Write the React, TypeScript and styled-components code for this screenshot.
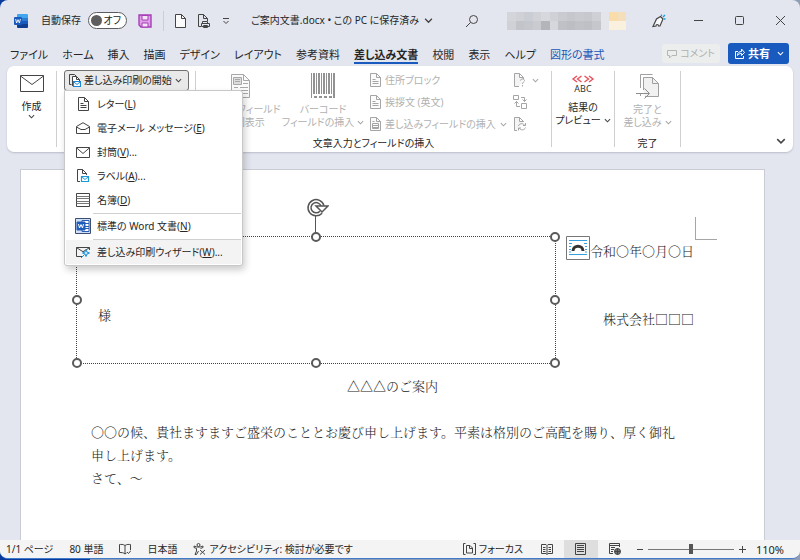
import React, { useState } from 'react';
import styled, { createGlobalStyle, css } from 'styled-components';

const GlobalStyle = createGlobalStyle`
  * { box-sizing: border-box; }
  body {
    margin: 0;
    background: linear-gradient(90deg, #0a3a9c 0 90px, #8f9db5 90px);
    color: #262626;
    font-family: 'Noto Sans', 'Noto Sans CJK JP', sans-serif;
    font-size: 10px;
    line-height: 13px;
  }
  button {
    margin: 0;
    padding: 0;
    border: 0;
    background: none;
    color: inherit;
    font: inherit;
    cursor: pointer;
  }
  button:disabled { color: #b1b1b1; cursor: default; }
  svg { display: block; flex: none; }
`;

const Window = styled.div`
  display: flex;
  flex-direction: column;
  min-height: calc(100vh - 1px);
  overflow: hidden;
  border-bottom: 1px solid #3f7acb;
  border-radius: 8px;
  background: #e3e6ef;
  font-feature-settings: 'palt';
  white-space: nowrap;
`;

const TitleBar = styled.header`
  display: flex;
  align-items: center;
  height: 41px;
  padding: 0 14px;
`;

const Cluster = styled.div<{ $gap: number; $left?: number }>`
  display: flex;
  align-items: center;
  gap: ${(p) => p.$gap}px;
  margin-left: ${(p) => p.$left ?? 0}px;
`;

const Spacer = styled.div`
  flex: 1;
`;

const AutoSave = styled.label`
  display: flex;
  align-items: center;
  gap: 7px;
  margin-left: 13px;
`;

const Toggle = styled.span`
  position: relative;
  display: flex;
  align-items: center;
  justify-content: flex-end;
  width: 39px;
  height: 17px;
  padding-right: 5px;
  border: 1px solid #5c5c5c;
  border-radius: 9px;
  background: #fff;

  input {
    position: absolute;
    left: 2px;
    width: 11px;
    height: 11px;
    margin: 0;
    border-radius: 50%;
    background: #5e5e5e;
    appearance: none;
  }
`;

const Divider = styled.span`
  width: 1px;
  height: 20px;
  background: #cbced6;
`;

const DocName = styled.button`
  display: flex;
  align-items: center;
  gap: 5px;
  margin-left: 21px;
`;

const TabRow = styled.nav`
  display: flex;
  align-items: center;
  height: 25px;
  padding: 0 11px 0 10px;
`;

const Tabs = styled.div`
  display: flex;
  gap: 14px;
`;

const Tab = styled.button<{ $active?: boolean; $context?: boolean }>`
  height: 20px;
  padding-top: 3px;
  border-bottom: 2px solid transparent;
  font-size: 11px;
  ${(p) => p.$context && css`color: #1b56b5;`}
  ${(p) => p.$active && css`
    border-color: #185abd;
    font-weight: 700;
  `}
`;

const CommentButton = styled.button`
  display: flex;
  align-items: center;
  gap: 3px;
  height: 19px;
  padding: 0 5px;
  border-radius: 3px;
  background: #eceded;
`;

const ShareButton = styled.button`
  display: flex;
  align-items: center;
  gap: 3px;
  height: 21px;
  margin-left: 8px;
  padding: 0 5px 0 6px;
  border-radius: 3px;
  background: #185abd;
  color: #fff;
  font-size: 11px;
  font-weight: 700;
`;

const Ribbon = styled.section`
  position: relative;
  z-index: 2;
  display: flex;
  height: 86px;
  margin: 0 7px;
  padding: 5px 0;
  border-radius: 7px;
  background: #fff;
  box-shadow: 0 1px 2px #b9bdc8;
`;

const Group = styled.div<{ $width: number }>`
  position: relative;
  display: flex;
  flex: none;
  flex-direction: column;
  align-items: center;
  justify-content: space-between;
  width: ${(p) => p.$width}px;
  border-right: 1px solid #cfcfcf;
`;

const Commands = styled.div`
  display: flex;
  align-items: flex-start;
  width: 100%;
`;

const BigButton = styled.button<{ $width?: number }>`
  display: flex;
  flex: none;
  flex-direction: column;
  align-items: center;
  width: ${(p) => (p.$width ? `${p.$width}px` : '100%')};
  padding-top: 2px;

  svg + span { margin-top: 4px; }
`;

const WithArrow = styled.span`
  display: flex;
  align-items: center;
  gap: 3px;
`;

const Stack = styled.div<{ $left?: number }>`
  display: flex;
  flex-direction: column;
  margin: -2px 0 0 ${(p) => p.$left ?? 0}px;
`;

const SmallButton = styled.button`
  display: flex;
  align-items: center;
  gap: 4px;
  height: 22px;
`;

const GroupLabel = styled.span`
  margin-bottom: -3px;
  color: #262626;
`;

const StartButton = styled.button`
  display: flex;
  align-items: center;
  gap: 3px;
  height: 21px;
  margin: -1px 0 0 7px;
  padding: 0 6px 0 4px;
  border: 1px solid #707070;
  border-radius: 3px;
  background: #e9e9e9;
`;

const Menu = styled.div`
  position: absolute;
  top: 19px;
  left: 7px;
  z-index: 3;
  width: 179px;
  padding: 1px;
  border: 1px solid #c8c8c8;
  border-radius: 0 3px 3px 3px;
  background: #fff;
  box-shadow: 2px 4px 7px #00000033;
`;

const MenuItem = styled.button<{ $hover?: boolean }>`
  display: flex;
  align-items: center;
  gap: 5px;
  width: 100%;
  height: 24px;
  padding-left: 8px;
  background: ${(p) => (p.$hover ? '#f3f3f3' : 'transparent')};
  text-align: left;
`;

const MenuIcon = styled.span`
  display: flex;
  flex: none;
  justify-content: center;
  width: 18px;
`;

const MenuLine = styled.hr`
  height: 1px;
  margin: 1px 0 0 27px;
  border: 0;
  background: #d0d0d0;
`;

const Collapse = styled.button`
  align-self: flex-end;
  margin: 0 7px 1px auto;
`;

const Workspace = styled.main`
  display: flex;
  flex: 1;
  padding: 17px 35px 0 20px;
`;

const Page = styled.article`
  position: relative;
  flex: 1;
  padding: 69px 70px 40px;
  border: 1px solid #c9ccd4;
  border-bottom: 0;
  background: #fff;
  color: #222;
  font-family: 'Noto Serif CJK JP', 'Noto Sans CJK JP', serif;
  font-feature-settings: normal;
  font-size: 13px;
  font-weight: 300;
  line-height: 23px;
  white-space: normal;
`;

const Line = styled.p<{ $align?: string; $after?: number }>`
  margin: 0 0 ${(p) => p.$after ?? 0}px;
  text-align: ${(p) => p.$align ?? 'left'};
`;

const Body = styled(Line)`
  padding-right: 12px;
`;

const TextBox = styled.div`
  position: absolute;
  top: 66px;
  left: 55px;
  display: flex;
  align-items: center;
  width: 480px;
  height: 128px;
  padding: 29px 21px 0;
  border: 1px dotted #444;
`;

const Handle = styled.span<{ $x: number; $y: number }>`
  position: absolute;
  top: ${(p) => p.$y}%;
  left: ${(p) => p.$x}%;
  width: 10px;
  height: 10px;
  margin: -5px;
  border: 2px solid #5a5a5a;
  border-radius: 50%;
  background: #fff;
`;

const Rotator = styled.span`
  position: absolute;
  bottom: 100%;
  left: 50%;
  margin-left: -9px;
`;

const CornerMark = styled.span`
  position: absolute;
  top: 47px;
  right: 47px;
  width: 22px;
  height: 23px;
  border: solid #a6a6a6;
  border-width: 0 0 1px 1px;
`;

const LayoutOptions = styled.button`
  position: absolute;
  top: 66px;
  right: 174px;
`;

const StatusBar = styled.footer`
  display: flex;
  align-items: center;
  height: 18px;
  padding: 0 16px 0 6px;
  background: #f4f4f4;
`;

const StatusItem = styled.button`
  display: flex;
  align-items: center;
  gap: 3px;
`;

const ZoomValue = styled(StatusItem)`
  margin-left: 10px;
  font-size: 11px;
`;

const ViewButton = styled.button<{ $active?: boolean }>`
  display: flex;
  align-items: center;
  justify-content: center;
  width: 34px;
  height: 18px;
  background: ${(p) => (p.$active ? '#dedede' : 'transparent')};
`;

const Zoom = styled.input`
  width: 86px;
  height: 12px;
  margin: 0;
  background: linear-gradient(#777, #777) center / 100% 1px no-repeat;
  appearance: none;

  &::-webkit-slider-thumb {
    width: 4px;
    height: 10px;
    background: #555;
    appearance: none;
  }
`;

const Svg = ({ w, h, children, color = '#444' }: { w: number; h: number; children: React.ReactNode; color?: string }) => (
  <svg width={w} height={h} viewBox={`0 0 ${w} ${h}`} fill="none" stroke={color} aria-hidden="true">
    {children}
  </svg>
);

const Chevron = ({ color = '#444', w = 7 }: { color?: string; w?: number }) => (
  <svg width={w} height={w} viewBox="0 0 8 8" fill="none" stroke={color} strokeWidth="1.2" aria-hidden="true">
    <path d="M1 2.5 4 5.5 7 2.5" />
  </svg>
);

const WordLogo = () => (
  <svg width="14" height="14" viewBox="0 0 14 14" role="img" aria-label="Word">
    <path d="M4 0h9a1 1 0 0 1 1 1v3H3V1a1 1 0 0 1 1-1z" fill="#41a5ee" />
    <path d="M3 4h11v3H3z" fill="#2b7cd3" />
    <path d="M3 7h11v3H3z" fill="#185abd" />
    <path d="M3 10h11v3a1 1 0 0 1-1 1H4a1 1 0 0 1-1-1z" fill="#103f91" />
    <rect y="3" width="8" height="8" rx="1" fill="#185abd" />
    <path d="m1.6 5 1 4L4 5.6 5.4 9l1-4" fill="none" stroke="#fff" strokeWidth="0.9" />
  </svg>
);

const mosaic = [
  ['#d3d5db', '#cfd1d7', '#cacdd3', '#d0d2d8', '#d6d8de', '#cfd1d6', '#c9cbd1', '#c5c7cd', '#c8cad0', '#c6c8cd', '#ced0d6'],
  ['#cfd1d7', '#c2c4c9', '#c5c7cd', '#c9cbd0', '#b3b5ba', '#d5d7dd', '#bfc1c6', '#bcbec3', '#c0c2c7', '#bec0c5', '#c5c7cc'],
];

const Account = () => (
  <svg width="122" height="18" viewBox="0 0 122 18" shapeRendering="crispEdges" role="img" aria-label="アカウント">
    {mosaic.map((row, y) => row.map((c, x) => (
      <rect key={`${x}-${y}`} x={x * 8.5} y={y * 9} width="9" height="9" fill={c} />
    )))}
    <path d="M94 0h8v18h-8z" fill="#e4e5ea" />
    <path d="M102 0h9v9h-9z" fill="#f8dcaa" />
    <path d="M111 0h8v9h-8z" fill="#f5dfba" />
    <path d="M102 9h17v9h-17z" fill="#faf0de" />
  </svg>
);

const PageIcon = ({ color = '#444', lines = true }: { color?: string; lines?: boolean }) => (
  <Svg w={11} h={14} color={color}>
    <path d="M.5 .5h6l4 4v9H.5z" fill="#fbfbfb" />
    <path d="M6.5 .5v4h4" />
    {lines && <path d="M2.5 6.5h3M2.5 8.5h6M2.5 10.5h6" />}
  </Svg>
);

const FieldIcon = () => (
  <Svg w={11} h={14} color="#a5a5a5">
    <path d="M.5 .5h6l4 4v9H.5z" fill="#fbfbfb" />
    <path d="M6.5 .5v4h4M2.5 4.5h2M2.5 6.5h6v5h-6zM2.5 8.5h6M2.5 10.5h6" />
  </Svg>
);

const PrintDocIcon = () => (
  <Svg w={14} h={14}>
    <path d="M4 12.5H1.500V.5h5l4 4V7" />
    <path d="M6.500 .5v4h4M5.500 9.500V7.500h5v2M4.500 9.500h8v3h-8zM6.500 11.500h4v2h-4z" />
  </Svg>
);

const SaveIcon = () => (
  <Svg w={14} h={14} color="#a73cb8">
    <path d="M1 1h12v12H3l-2-2z" fill="#dd9fe6" strokeWidth="1.4" />
    <path d="M4 1.500h6V6H4zM4 9h6v4H4z" fill="#f3e6f7" />
  </Svg>
);

const StartIcon = () => (
  <Svg w={12} h={14}>
    <path d="M2.500 10.500H.5V.5h5l2 2" />
    <path d="M3.500 7V2.500h4l3 3V7M3.500 7v5" fill="#fff" />
    <path d="M7.500 2.500v3h3" />
    <path d="M4.500 7.500h7v5h-7z" fill="#fff" stroke="#1c86d8" strokeWidth="1.200" />
    <path d="m5 8 3 2.500L11 8" stroke="#1c86d8" />
  </Svg>
);

const LabelIcon = () => (
  <Svg w={14} h={14}>
    <path d="M4 12.500H1.500V.5h5l4 4V6M6.500 .5v4h4" />
    <path d="M5.500 7.500h7v5h-7z" fill="#fff" stroke="#1c9ad8" strokeWidth="1.200" />
    <path d="m6 8 3 2.500L12 8" stroke="#1c9ad8" />
  </Svg>
);

const Envelope = ({ w = 14, h = 11 }: { w?: number; h?: number }) => (
  <Svg w={w} h={h}>
    <path d={`M.5 .5h${w - 1}v${h - 1}H.5z`} />
    <path d={`M.5 .8 ${w / 2} ${h / 2 + 1} ${w - 0.5} .8`} />
  </Svg>
);

const OpenEnvelope = () => (
  <Svg w={14} h={12}>
    <path d="M.5 4.500v7h13v-7L7 .7zM.5 5 5 7.500h4L13.500 5" />
  </Svg>
);

const Directory = () => (
  <Svg w={14} h={14}>
    <path d="M.5 .5h13v13H.5z" />
    <path d="M.5 3.500h13M.5 5.500h13M.5 8.500h13M.5 10.500h13" stroke="#777" />
  </Svg>
);

const WordDocIcon = () => (
  <Svg w={16} h={16} color="#2b5fb5">
    <path d="M.5 .5h15v15H.5z" fill="#cfe0f7" stroke="#3b4f74" />
    <path d="M7 2.500h7v11H7zM9.500 5.500H14M9.500 8.500H14M9.500 10.500H14" fill="#fff" />
    <path d="M2 4h8v8H2z" fill="#185abd" />
    <path d="m3.500 6 1 4L6 6.500 7.500 10l1-4" stroke="#fff" />
  </Svg>
);

const WizardIcon = () => (
  <Svg w={14} h={12}>
    <path d="M6 10.500H.5V1.500h13V4M.5 1.700l6.500 4L13.500 1.700" />
    <path d="m10 3.500 1 2.500 2.500 1-2.500 1-1 2.500L9 8 6.500 7 9 6zM8.500 8.500 5 12" stroke="#1c8fd8" fill="#bfe3fa" />
  </Svg>
);

const HighlightIcon = () => (
  <Svg w={19} h={26} color="#a8a8a8">
    <path d="M.5 1.500h12l6 6v17H.5z" fill="#fafafa" />
    <path d="M12.500 1.500v6h6" />
    <path d="M2.500 4.500h8v7h-8z" fill="#ddd" />
    <path d="M4 6.500h5M4 8.500h5M12 10.500h5M3 14.500h4M9 14.500h8M3 17.500h14M3 20.500h4M9 20.500h8" />
  </Svg>
);

const bars: [number, number][] = [[0, 1], [2, 2], [5, 1], [7, 2], [10, 1], [12, 2], [15, 1], [17, 2], [20, 1], [22, 2]];

const Barcode = () => (
  <svg width="24" height="26" viewBox="0 0 24 26" fill="#929292" aria-hidden="true">
    {bars.map(([x, w], i) => <rect key={x} x={x} width={w} height={i % 9 ? 21 : 25} />)}
    <path d="M3 23h3v2H3zM8 23h3v2H8zM13 23h3v2h-3zM18 23h3v2h-3z" />
  </svg>
);

const RuleIcon = () => (
  <Svg w={15} h={14} color="#a5a5a5">
    <path d="M6 13.500H1.500V.5h5l4 4V6M6.500 .5v4h4" fill="#f4f4f4" />
    <path d="M7.500 7.500c0-2 4-2 4 0 0 1.500-2 1.500-2 3.500M9.500 12v1.500" />
  </Svg>
);

const MatchIcon = () => (
  <Svg w={15} h={14} color="#a5a5a5">
    <path d="M.5 .5h5v4h-5zM8.500 8.500h5v5h-5zM8 2.500h3.500v4M9.500 4.500l2 2 2-2M3.500 6.500v5H7M1.500 8.500l2-2 2 2" />
  </Svg>
);

const RefreshDocIcon = () => (
  <Svg w={15} h={14} color="#a5a5a5">
    <path d="M4 13.500H1.500V.5h5l4 4V5M6.500 .5v4h4" fill="#f4f4f4" />
    <path d="M5.500 9c.5-3 5-3 6.500-.5M12.500 6v2.500H10M12.500 10.500c-1 3-5 3-6.500 .5M5.500 13.500V11H8" />
  </Svg>
);

const PreviewIcon = () => (
  <svg width="24" height="24" viewBox="0 0 24 24" fill="none" stroke="#e8505a" strokeWidth="1.400" aria-hidden="true">
    <path d="M6 3 2 6l4 3M10.500 3l-4 3 4 3M13.500 3l4 3-4 3M18 3l4 3-4 3" />
    <text x="12" y="19" textAnchor="middle" fill="#333" stroke="none" fontSize="9">ABC</text>
  </svg>
);

const FinishIcon = () => (
  <Svg w={24} h={26} color="#a0a0a0">
    <path d="M4.500 15V1.500h12M4.500 20v3" />
    <path d="M7.500 17V4.500h9l6 6v13H9" fill="#f1f1f1" />
    <path d="M16.500 4.500v6h6" />
    <path d="M0 20.500h13M8.500 15.500l5 5-5 5" stroke="#8c8c8c" />
  </Svg>
);

const PenIcon = () => (
  <Svg w={14} h={14}>
    <path d="M1 12.500 4.500 5l4-2.500 2.500 2.500-3 7H6.500C6.500 10 4 10 4 12z" fill="#f7f8fb" strokeWidth="1.200" />
    <path d="M9.500 2V.5M11 3l2-2M12 5h1.500" stroke="#1c9ad8" strokeWidth="1.300" />
  </Svg>
);

const LayoutIcon = () => (
  <svg width="24" height="24" viewBox="0 0 24 24" fill="none" aria-hidden="true">
    <path d="M.5 .5h23v23H.5z" fill="#fff" stroke="#777" />
    <path d="M3 4.500h18M3 18.500h18M3 7.500h3M3 10.500h2M3 13.500h2M3 16h2M18 7.500h3M19 10.500h2M19 13.500h2M19 16h2" stroke="#35a0e0" />
    <path d="M7 15c0-6.500 10-6.500 10 0" stroke="#333" strokeWidth="3" />
  </svg>
);

const RotateIcon = () => (
  <svg width="22" height="40" viewBox="0 0 22 40" fill="none" stroke="#555" aria-hidden="true">
    <path d="M8.500 18v18" />
    <path d="M14 15.200A6.600 6.600 0 1 1 15.500 9" strokeWidth="4.500" />
    <path d="M14 15.200A6.600 6.600 0 1 1 15.500 9" stroke="#fff" strokeWidth="1.500" />
    <path d="M9 9h12l-6 6z" fill="#fff" strokeWidth="1.500" />
  </svg>
);

const menuItems = [
  { icon: <PageIcon />, text: 'レター', k: 'L', end: '' },
  { icon: <OpenEnvelope />, text: '電子メール メッセージ', k: 'E', end: '' },
  { icon: <Envelope />, text: '封筒', k: 'V', end: '...' },
  { icon: <LabelIcon />, text: 'ラベル', k: 'A', end: '...' },
  { icon: <Directory />, text: '名簿', k: 'D', end: '' },
  { icon: <WordDocIcon />, text: '標準の Word 文書', k: 'N', end: '', line: true },
  { icon: <WizardIcon />, text: '差し込み印刷ウィザード', k: 'W', end: '...', line: true, hover: true },
];

const tabs = ['ファイル', 'ホーム', '挿入', '描画', 'デザイン', 'レイアウト', '参考資料', '差し込み文書', '校閲', '表示', 'ヘルプ', '図形の書式'];

const handles: [number, number][] = [[0, 0], [50, 0], [100, 0], [0, 50], [100, 50], [0, 100], [50, 100], [100, 100]];

export default function App() {
  const [autoSave, setAutoSave] = useState(false);
  const [active, setActive] = useState('差し込み文書');
  const [zoom, setZoom] = useState(110);

  return (
    <>
      <GlobalStyle />
      <Window>
        <TitleBar>
          <WordLogo />
          <AutoSave>
            自動保存
            <Toggle>
              <input type="checkbox" role="switch" checked={autoSave} onChange={(e) => setAutoSave(e.target.checked)} />
              オフ
            </Toggle>
          </AutoSave>
          <Cluster $gap={11} $left={11}>
            <button aria-label="上書き保存"><SaveIcon /></button>
            <Divider />
            <button aria-label="新規作成"><PageIcon lines={false} /></button>
            <button aria-label="印刷"><PrintDocIcon /></button>
            <button aria-label="クイック アクセスのカスタマイズ">
              <Svg w={8} h={8}><path d="M1 1.500h6M1.500 4 4 6.500 6.500 4" /></Svg>
            </button>
          </Cluster>
          <DocName>ご案内文書.docx • この PC に保存済み <Chevron w={9} /></DocName>
          <Spacer />
          <button aria-label="検索">
            <Svg w={14} h={14}><circle cx="8.500" cy="5.500" r="4" /><path d="M5.500 8.500 1 13" /></Svg>
          </button>
          <Cluster $gap={23} $left={28}>
            <Account />
            <button aria-label="ペン"><PenIcon /></button>
          </Cluster>
          <Cluster $gap={30} $left={27}>
            <button aria-label="最小化"><Svg w={11} h={11}><path d="M1 5.500h9" /></Svg></button>
            <button aria-label="最大化"><Svg w={11} h={11}><rect x="1.500" y="1.500" width="8" height="8" rx="1" /></Svg></button>
            <button aria-label="閉じる"><Svg w={11} h={11}><path d="m1 1 9 9M10 1l-9 9" /></Svg></button>
          </Cluster>
        </TitleBar>

        <TabRow>
          <Tabs role="tablist">
            {tabs.map((t) => (
              <Tab key={t} role="tab" aria-selected={t === active} $active={t === active} $context={t === '図形の書式'} onClick={() => setActive(t)}>
                {t}
              </Tab>
            ))}
          </Tabs>
          <Spacer />
          <CommentButton disabled>
            <Svg w={10} h={10} color="#b5b5b5"><path d="M.5 1.500h9v5H5L2.500 9V6.500h-2z" /></Svg>
            コメント
          </CommentButton>
          <ShareButton>
            <Svg w={11} h={11} color="#fff"><path d="M4 3.500H1.500v7h8V8M3.500 7.500c0-3 2-4 4-4V1l3 3.500-3 3V5.500c-2 0-3 .5-4 2z" /></Svg>
            共有
            <Cluster $gap={0} $left={4}><Chevron color="#fff" /></Cluster>
          </ShareButton>
        </TabRow>

        <Ribbon>
          <Group $width={50}>
            <BigButton>
              <Svg w={24} h={23}><path d="M.5 2.500h23v16H.5zM.5 3 12 11.500 23.500 3" /></Svg>
              <span>作成</span>
              <Chevron />
            </BigButton>
          </Group>

          <Group $width={139}>
            <Commands>
              <StartButton aria-haspopup="menu" aria-expanded="true">
                <StartIcon />差し込み印刷の開始<Chevron />
              </StartButton>
            </Commands>
            <Menu role="menu">
              {menuItems.map((m) => (
                <React.Fragment key={m.k}>
                  {m.line && <MenuLine />}
                  <MenuItem role="menuitem" $hover={m.hover}>
                    <MenuIcon>{m.icon}</MenuIcon>
                    <span>{m.text}(<u>{m.k}</u>){m.end}</span>
                  </MenuItem>
                </React.Fragment>
              ))}
            </Menu>
          </Group>

          <Group $width={356}>
            <Commands>
              <BigButton disabled $width={88}>
                <HighlightIcon />
                <span>差し込みフィールド</span>
                <span>の強調表示</span>
              </BigButton>
              <BigButton disabled $width={78}>
                <Barcode />
                <span>バーコード</span>
                <WithArrow>フィールドの挿入 <Chevron color="#a5a5a5" /></WithArrow>
              </BigButton>
              <Stack $left={8}>
                <SmallButton disabled><PageIcon color="#a5a5a5" />住所ブロック</SmallButton>
                <SmallButton disabled><PageIcon color="#a5a5a5" />挨拶文 (英文)</SmallButton>
                <SmallButton disabled>
                  <FieldIcon />差し込みフィールドの挿入<Chevron color="#a5a5a5" />
                </SmallButton>
              </Stack>
              <Stack $left={6}>
                <SmallButton disabled aria-label="ルール"><RuleIcon /><Chevron color="#a5a5a5" /></SmallButton>
                <SmallButton disabled aria-label="フィールドの一致"><MatchIcon /></SmallButton>
                <SmallButton disabled aria-label="複数ラベルに反映"><RefreshDocIcon /></SmallButton>
              </Stack>
            </Commands>
            <GroupLabel>文章入力とフィールドの挿入</GroupLabel>
          </Group>

          <Group $width={63}>
            <BigButton>
              <PreviewIcon />
              <span>結果の</span>
              <WithArrow>プレビュー <Chevron /></WithArrow>
            </BigButton>
          </Group>

          <Group $width={66}>
            <BigButton disabled>
              <FinishIcon />
              <span>完了と</span>
              <WithArrow>差し込み <Chevron color="#a5a5a5" /></WithArrow>
            </BigButton>
            <GroupLabel>完了</GroupLabel>
          </Group>
          <Collapse aria-label="リボンを折りたたむ"><Chevron w={10} /></Collapse>
        </Ribbon>

        <Workspace>
          <Page>
            <CornerMark />
            <Line $align="right" $after={45}>令和〇年〇月〇日</Line>
            <Line $align="right" $after={44}>株式会社□□□</Line>
            <Line $align="center" $after={23}>△△△のご案内</Line>
            <Body>〇〇の候、貴社ますますご盛栄のこととお慶び申し上げます。平素は格別のご高配を賜り、厚く御礼申し上げます。</Body>
            <Body>さて、～</Body>
            <TextBox>
              様
              <Rotator><RotateIcon /></Rotator>
              {handles.map(([x, y]) => <Handle key={`${x}-${y}`} $x={x} $y={y} />)}
            </TextBox>
            <LayoutOptions aria-label="レイアウト オプション"><LayoutIcon /></LayoutOptions>
          </Page>
        </Workspace>

        <StatusBar>
          <Cluster $gap={16}>
            <StatusItem>1/1 ページ</StatusItem>
            <StatusItem>80 単語</StatusItem>
            <StatusItem aria-label="文章校正">
              <Svg w={12} h={12}><path d="M6 2.500C4 1 2 1.500 .5 1.500v8c2 0 4 0 5.500 1.500V2.500C8 1 10 1.500 11.500 1.500V7M6 11l1.500-1M8 9l1.500 1.500L12 7.500" /></Svg>
            </StatusItem>
            <StatusItem>日本語</StatusItem>
            <StatusItem>
              <Svg w={13} h={12}><circle cx="5.500" cy="2" r="1.500" /><path d="M1 3c3 1.500 6 1.500 9 0v1.500L7.500 5.500M1 3v1.500l2.500 1V8L2 11.500h1.500L5.500 8M7 7l5 4.500M12 7l-5 4.500" /></Svg>
              アクセシビリティ: 検討が必要です
            </StatusItem>
          </Cluster>
          <Spacer />
          <StatusItem>
            <Svg w={13} h={12}><path d="M2.500 .5h-2v11h2M10.500 .5h2v11h-2M3.500 2.500H7l2.500 2.500v5h-6zM6.500 2.500v3h3" /></Svg>
            フォーカス
          </StatusItem>
          <Cluster $gap={0} $left={7}>
            <ViewButton aria-label="閲覧モード">
              <Svg w={12} h={12}><path d="M.5 1.500H5l1 1 1-1h4.500v9H7l-1 1-1-1H.5zM6 2.500v9M2 4.500h2.500M2 6.500h2.500M2 8.500h2.500M7.500 4.500H10M7.500 6.500H10M7.500 8.500H10" /></Svg>
            </ViewButton>
            <ViewButton $active aria-label="印刷レイアウト">
              <Svg w={11} h={12}><path d="M.5 .5h10v11H.5zM2 2.500h7M2 4.500h7M2 6.500h7M2 8.500h7" /></Svg>
            </ViewButton>
            <ViewButton aria-label="Web レイアウト">
              <Svg w={12} h={12}><path d="M4 10.500H.5V.5h10V4M.5 2.500h10M2 4.500h4M2 6.500h3M2 8.500h2" /><circle cx="8.500" cy="8.500" r="3" fill="#777" /><path d="M5.500 8.500h6M8.500 5.500v6" /></Svg>
            </ViewButton>
          </Cluster>
          <Cluster $gap={4} $left={4}>
            <button aria-label="縮小"><Svg w={8} h={8}><path d="M1 4.500h6" /></Svg></button>
            <Zoom type="range" aria-label="ズーム" min={10} max={210} value={zoom} onChange={(e) => setZoom(Number(e.target.value))} />
            <button aria-label="拡大"><Svg w={8} h={8}><path d="M1 4.500h7M4.500 1v7" /></Svg></button>
          </Cluster>
          <ZoomValue>{zoom}%</ZoomValue>
        </StatusBar>
      </Window>
    </>
  );
}
